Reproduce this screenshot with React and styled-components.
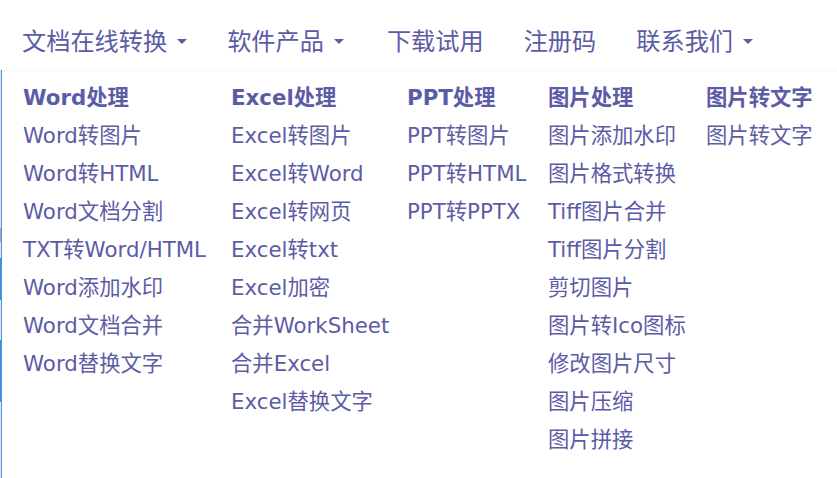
import React from 'react'
import styled, { createGlobalStyle } from 'styled-components'

const GlobalStyle = createGlobalStyle`
  html, body {
    margin: 0;
    padding: 0;
    background: #fff;
  }
  body {
    font-family: "DejaVu Sans", "Noto Sans CJK SC", sans-serif;
    color: #5c5ca6;
  }
`

const navItems = [
  { label: '文档在线转换', caret: true },
  { label: '软件产品', caret: true },
  { label: '下载试用' },
  { label: '注册码' },
  { label: '联系我们', caret: true },
]

const columns = [
  {
    title: 'Word处理',
    width: 208,
    items: ['Word转图片', 'Word转HTML', 'Word文档分割', 'TXT转Word/HTML', 'Word添加水印', 'Word文档合并', 'Word替换文字'],
  },
  {
    title: 'Excel处理',
    width: 176,
    items: ['Excel转图片', 'Excel转Word', 'Excel转网页', 'Excel转txt', 'Excel加密', '合并WorkSheet', '合并Excel', 'Excel替换文字'],
  },
  {
    title: 'PPT处理',
    width: 141,
    items: ['PPT转图片', 'PPT转HTML', 'PPT转PPTX'],
  },
  {
    title: '图片处理',
    width: 158,
    items: ['图片添加水印', '图片格式转换', 'Tiff图片合并', 'Tiff图片分割', '剪切图片', '图片转Ico图标', '修改图片尺寸', '图片压缩', '图片拼接'],
  },
  {
    title: '图片转文字',
    items: ['图片转文字'],
  },
]

export default function App() {
  return (
    <Page>
      <GlobalStyle />
      <NavBar>
        {navItems.map(item => (
          <NavItem key={item.label}>
            {item.label}
            {item.caret && <Caret />}
          </NavItem>
        ))}
      </NavBar>

      <Body>
        <Edge />
        <Menu>
          {columns.map(col => (
            <Column key={col.title} $width={col.width}>
              <Heading>{col.title}</Heading>
              {col.items.map(text => (
                <Link key={text}>{text}</Link>
              ))}
            </Column>
          ))}
        </Menu>
      </Body>
    </Page>
  )
}

const Page = styled.div`
  width: 837px;
  height: 478px;
  overflow: hidden;
  display: flex;
  flex-direction: column;
`

const NavBar = styled.nav`
  height: 70px;
  box-sizing: border-box;
  padding: 10px 0 0 2px;
  display: flex;
  align-items: center;
  box-shadow: 0 1px 2px rgba(0, 0, 0, 0.04);
  position: relative;
  z-index: 1;
`

const NavItem = styled.div`
  display: flex;
  align-items: center;
  padding: 0 20px;
  font-family: "Noto Sans CJK SC", sans-serif;
  font-size: 24.2px;
  line-height: 30px;
  color: #5c5ca6;

  &:nth-child(2) {
    padding-right: 23px;
  }
`

const Caret = styled.span`
  display: inline-block;
  margin-left: 10px;
  margin-top: 2px;
  width: 0;
  height: 0;
  border-left: 5px solid transparent;
  border-right: 5px solid transparent;
  border-top: 5px solid #5c5ca6;
`

const Body = styled.div`
  flex: 1;
  display: flex;
`

const Edge = styled.div`
  width: 1px;
  flex-shrink: 0;
  border-right: 1px solid #4a93e6;
  background: linear-gradient(
    to bottom,
    #e6e6e6 0,
    #e6e6e6 158px,
    #a9a9a9 158px,
    #a9a9a9 172px,
    #e6e6e6 172px,
    #e6e6e6 188px,
    #3a8ee6 188px,
    #3a8ee6 230px,
    #e6e6e6 230px,
    #e6e6e6 270px,
    #3a8ee6 270px,
    #3a8ee6 332px,
    #e6e6e6 332px
  );
`

const Menu = styled.div`
  flex: 1;
  display: flex;
  padding: 9px 0 0 21px;
`

const Column = styled.div`
  display: flex;
  flex-direction: column;
  width: ${p => (p.$width ? `${p.$width}px` : 'auto')};
  flex-shrink: 0;
`

const Heading = styled.div`
  font-size: 21.33px;
  line-height: 38px;
  font-weight: 700;
  color: #5c5ca6;
  white-space: nowrap;
`

const Link = styled.div`
  font-size: 21.33px;
  line-height: 38px;
  color: #5c5ca6;
  white-space: nowrap;
`
